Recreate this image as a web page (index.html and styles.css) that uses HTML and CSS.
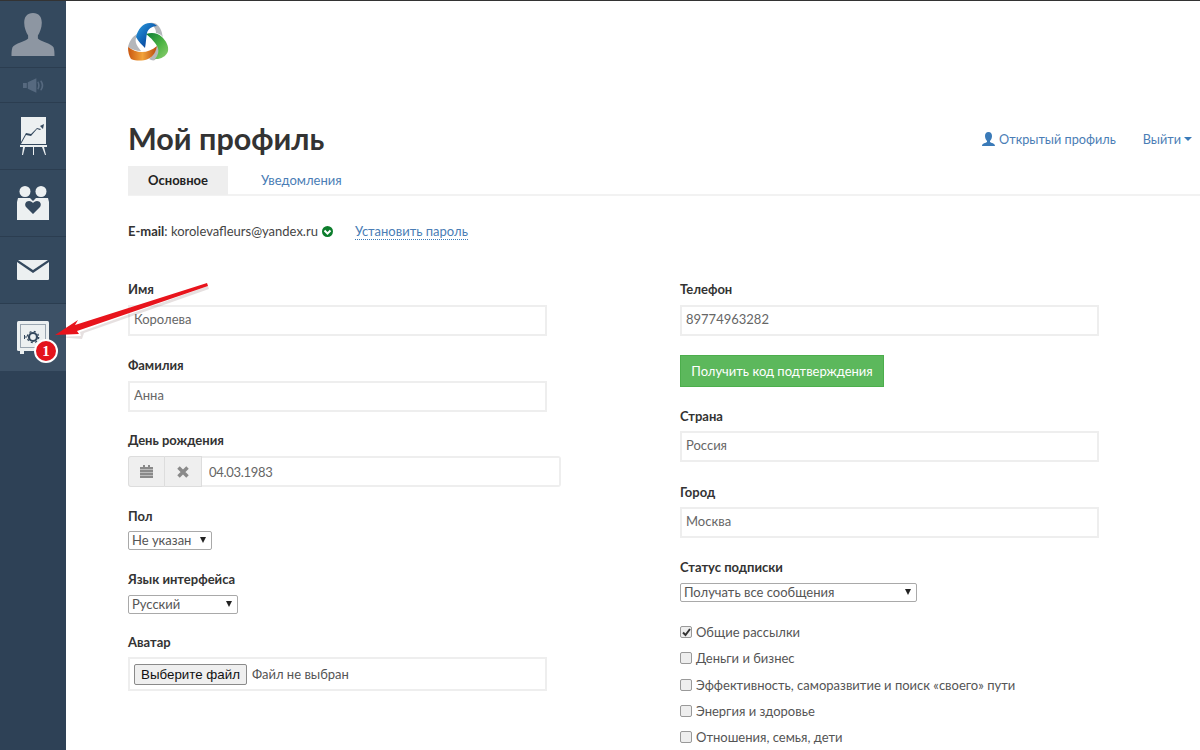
FILE: index.html
```html
<!DOCTYPE html>
<html lang="ru">
<head>
<meta charset="utf-8">
<title>Мой профиль</title>
<link rel="stylesheet" href="styles.css">
</head>
<body>
<div class="app">
  <nav class="side">
    <a class="side-item side-user">
      <svg width="44" height="43" viewBox="0 0 44 44"><path fill="#8d96a2" d="M22 0c6 0 9 4 9 10 0 5-2 10-4 13v3c2 3 14 5 16 9 1 3 1 6 1 9H0c0-3 0-6 1-9 2-4 14-6 16-9v-3c-2-3-4-8-4-13 0-6 3-10 9-10z"/></svg>
    </a>
    <a class="side-item side-sound">
      <svg width="21" height="15" viewBox="0 0 22 15"><path fill="#56697f" d="M0 5h4v5H0zM5 4l9-4v15l-9-4zM16 3c2 3 2 6 0 9l-1-1c1-2 1-5 0-7zM19 2c3 3 3 8 0 11l-1-1c2-3 2-6 0-9z"/></svg>
    </a>
    <a class="side-item side-chart">
      <svg width="27" height="38" viewBox="0 0 27 38"><path fill="#ecf0f1" d="M1 0h25v27H1z"/><path fill="#34495e" d="M1 25l5-9 5 1 6-6 4 1-1 1-3-1-6 7-5-1-5 9zM24 7l-4 2 3 3z"/><path fill="#ecf0f1" d="M0 28h27v2H0zM3 30h2l-2 8H2zM13 30h1v8h-1zM22 30h2l2 8h-1z"/></svg>
    </a>
    <a class="side-item side-people">
      <svg width="32" height="34" viewBox="0 0 32 34"><circle cx="8" cy="5.500" r="5.500" fill="#ecf0f1"/><circle cx="24" cy="5.500" r="5.500" fill="#ecf0f1"/><path fill="#ecf0f1" d="M1 12h12l3 3 3-3h12l1 4v18H0V16z"/><path fill="#34495e" d="M16 28l-7-7c-2-3 0-6 3-6 2 0 3 1 4 2 1-1 2-2 4-2 3 0 5 3 3 6z"/></svg>
    </a>
    <a class="side-item side-mail">
      <svg width="32" height="20" viewBox="0 0 32 20"><path fill="#ecf0f1" d="M1 0h30l-15 10zM0 2l16 11L32 2v17a1 1 0 0 1-1 1H1a1 1 0 0 1-1-1z"/></svg>
    </a>
    <a class="side-item side-safe">
      <svg width="32" height="33" viewBox="0 0 32 33"><rect width="32" height="30" rx="1.500" fill="#ecf0f1"/><path fill="#ecf0f1" d="M3 30h4v3H3zM25 30h4v3h-4z"/><rect x="3.500" y="3.500" width="25" height="23" fill="none" stroke="#9aa6b1"/><circle cx="16" cy="16" r="4" fill="none" stroke="#34495e" stroke-width="2.200"/><circle cx="16" cy="16" r="5.700" fill="none" stroke="#34495e" stroke-width="1.300" stroke-dasharray="2 2.500"/><path stroke="#34495e" fill="none" d="M7 16h3M7.500 14v4"/></svg>
      <span class="badge">1</span>
    </a>
  </nav>
  <main class="main">
    <div class="logo-row">
      <svg class="logo" width="41" height="40" viewBox="0 0 41 40">
        <defs>
          <linearGradient id="gb" x1="0" y1="0" x2="1" y2="1"><stop offset="0" stop-color="#2f9fdf"/><stop offset=".55" stop-color="#0d5cb0"/><stop offset="1" stop-color="#1a2f78"/></linearGradient>
          <linearGradient id="gg" x1="0" y1="0" x2="1" y2="1"><stop offset="0" stop-color="#0b7a35"/><stop offset=".55" stop-color="#4fb544"/><stop offset="1" stop-color="#8fce72"/></linearGradient>
          <linearGradient id="go" x1="0" y1="0" x2="1" y2="0"><stop offset="0" stop-color="#c9560f"/><stop offset=".5" stop-color="#f2a33a"/><stop offset="1" stop-color="#b84a10"/></linearGradient>
        </defs>
        <path fill="#b4b7bb" d="M22 1c5-1 10 2 12 10 0 2 1 3 1 4-3-3-5-4-7-4 0-3-1-5-3-7zM0 25c1-5 4-10 9-13l-1 4c-1 3 0 6 2 9l3 4c-5 0-10-2-13-4zM21 37c3-2 7-7 8-13l2 2c0 5-1 8-4 12-2 1-4 0-6-1z"/>
        <path fill="url(#gb)" d="M8 15c2-8 7-14 14-14 3 0 5 1 7 3-5 0-9 3-10 7-1 5-1 10-2 15-3-3-7-7-9-11z"/>
        <path fill="url(#gg)" d="M18 12c6-2 12-1 16 3 4 4 7 9 6 14-1 4-5 7-10 8h-3c3-4 4-7 3-11-2-5-7-10-12-14z"/>
        <path fill="url(#go)" d="M0 25c4 3 9 5 14 5s10-2 15-6c-1 6-4 11-9 13-5 2-12 2-17 0-2-3-3-7-3-12z"/>
      </svg>
    </div>
    <header class="head">
      <h1>Мой профиль</h1>
      <div class="head-links">
        <a class="link">
          <svg width="13" height="14" viewBox="0 0 13 14"><path fill="#3a7ab8" d="M6.500 0C9 0 10 2 10 4s-1 4-2 5v1c1 1 5 1 5 4H0c0-3 4-3 5-4V9C4 8 3 6 3 4s1-4 3.500-4z"/></svg>
          <span>Открытый профиль</span>
        </a>
        <a class="link link-menu"><span>Выйти</span><i class="caret"></i></a>
      </div>
    </header>
    <div class="tabs">
      <a class="tab tab-active">Основное</a>
      <a class="tab">Уведомления</a>
    </div>
    <div class="email-row">
      <span><b>E-mail</b>: korolevafleurs@yandex.ru</span>
      <svg class="ok" width="11" height="11" viewBox="0 0 11 11"><circle cx="5.500" cy="5.500" r="5.500" fill="#0c7d2c"/><path fill="none" stroke="#fff" stroke-width="2" d="M2.500 4.500l3 3 3-3"/></svg>
      <a class="dashed">Установить пароль</a>
    </div>
    <form class="form">
      <div class="col">
        <div class="field"><label>Имя</label><input class="input" value="Королева"></div>
        <div class="field f75"><label>Фамилия</label><input class="input" value="Анна"></div>
        <div class="field"><label>День рождения</label>
          <div class="date">
            <span class="addon"><svg width="13" height="13" viewBox="0 0 13 13"><path fill="#8a8a8a" d="M0 2h13v11H0zM3 0h2v2H3zM8 0h2v2H8z"/><path stroke="#eee" stroke-width=".5" d="M0 4.500h13M0 7.500h13M0 10.500h13"/></svg></span>
            <span class="addon"><svg width="12" height="12" viewBox="0 0 12 12"><path stroke="#8a8a8a" stroke-width="3.500" d="M1.500 1.500l9 9M10.500 1.500l-9 9"/></svg></span>
            <input class="date-input" value="04.03.1983">
          </div>
        </div>
        <div class="field f63 tight"><label>Пол</label><div class="sel sel-gender">Не указан<i></i></div></div>
        <div class="field f63"><label>Язык интерфейса</label><div class="sel sel-lang">Русский<i></i></div></div>
        <div class="field tight"><label>Аватар</label><div class="filebox"><span class="filebtn">Выберите файл</span><span>Файл не выбран</span></div></div>
      </div>
      <div class="col">
        <div class="field f74"><label>Телефон</label><input class="input" value="89774963282"></div>
        <button class="btn" type="button">Получить код подтверждения</button>
        <div class="field tight"><label>Страна</label><input class="input" value="Россия"></div>
        <div class="field f75 tight"><label>Город</label><input class="input" value="Москва"></div>
        <div class="field f60"><label>Статус подписки</label><div class="sel sel-status">Получать все сообщения<i></i></div></div>
        <ul class="checks">
          <li><span class="cb cb-on"><svg width="9" height="9" viewBox="0 0 9 9"><path fill="none" stroke="#333" stroke-width="2" d="M1 4.500l2.500 2.500L8 1"/></svg></span>Общие рассылки</li>
          <li><span class="cb"></span>Деньги и бизнес</li>
          <li><span class="cb"></span>Эффективность, саморазвитие и поиск «своего» пути</li>
          <li><span class="cb"></span>Энергия и здоровье</li>
          <li><span class="cb"></span>Отношения, семья, дети</li>
        </ul>
      </div>
    </form>
  </main>
</div>
<svg class="arrow" width="160" height="62" viewBox="0 0 160 62">
  <path fill="#5a3030" opacity=".15" d="M158 5L30 51l1 4-24 1 25 2 2-6L159 8z"/>
  <path fill="#e8141c" d="M157 2L25 44l3-5L5 54l24-1-2-3L158 5z"/>
</svg>
</body>
</html>
```
FILE: styles.css
```css
* { box-sizing: border-box; }
html, body { margin: 0; height: 100%; overflow: hidden; }
body {
  font-family: "Lato", "Open Sans", sans-serif;
  font-size: 13px;
  color: #333;
  background: #fff;
  position: relative;
  border-top: 1px solid #333;
}
.app { display: flex; height: 749px; }
.side { width: 66px; flex: none; background: #2e4156; display: flex; flex-direction: column; }
.side-item { display: flex; align-items: center; justify-content: center; background: #34495e; border-bottom: 1px solid #2b3d50; }
.side-user { height: 67px; }
.side-sound { height: 35px; }
.side-chart, .side-people, .side-mail { height: 67px; }
.side-safe { height: 67px; background: #3d5166; border-bottom: 0; position: relative; }
.badge {
  position: absolute; left: 34px; top: 35px; width: 24px; height: 24px; border-radius: 50%;
  background: #e3141c; border: 2px solid #fff; color: #fff; font: bold 15px/20px "Liberation Serif", serif; text-align: center;
}
.main { flex: 1; padding-left: 62px; min-width: 0; }
.logo-row { height: 62px; padding-top: 21px; }
.logo { display: block; }
.head { display: flex; justify-content: space-between; align-items: flex-start; margin-top: 55px; height: 48px; padding-right: 8px; }
h1 { margin: 0; font-size: 30.500px; line-height: 40px; font-weight: 700; color: #333; }
.head-links { display: flex; gap: 27px; padding-top: 13px; }
.link { color: #4a7db5; font-size: 12.700px; display: flex; align-items: center; gap: 4px; }
.link-menu { gap: 3px; }
.caret { display: inline-block; border: 4px solid transparent; border-top-color: #3a7ab8; border-bottom: 0; }
.tabs { display: flex; height: 30px; border-bottom: 2px solid #f2f2f2; }
.tab { height: 29px; line-height: 29px; text-align: center; color: #4a7db5; font-size: 13px; }
.tab-active { width: 100px; background: #eee; color: #222; font-weight: 700; margin-right: 33px; }
.email-row { margin-top: 25px; height: 20px; font-size: 13px; color: #444; display: flex; align-items: center; }
.email-row b { color: #333; }
.ok { margin-left: 4px; }
.dashed { margin-left: 22px; color: #4a7db5; border-bottom: 1px dotted #3a7ab8; line-height: 16px; }
.form { display: grid; grid-template-columns: 419px 419px; column-gap: 133px; margin-top: 40px; }
.field { display: flex; flex-direction: column; align-items: flex-start; height: 76px; }
.f75 { height: 75px; }
.f74 { height: 74px; }
.f63 { height: 63px; }
.f60 { height: 60px; }
label { font-weight: 700; font-size: 13px; line-height: 16px; color: #333; height: 16px; margin-bottom: 8px; }
.tight label { margin-bottom: 7px; }
.input { height: 31px; width: 419px; flex: none; border: 2px solid #eee; padding: 0 4px 3px; font: 13px "Lato", "Open Sans", sans-serif; color: #666; background: #fff; border-radius: 0; outline: 0; }
.date { display: flex; flex: none; width: 433px; height: 31px; border: 2px solid #eee; border-radius: 3px; }
.addon { width: 37px; flex: none; background: #efefef; border: 1px solid #ddd; border-left: 0; display: flex; align-items: center; justify-content: center; margin: -2px 0; }
.addon:first-child { margin-left: -2px; border-left: 1px solid #ddd; border-radius: 3px 0 0 3px; }
.date-input { flex: 1; border: 0; outline: 0; padding: 0 7px; font: 13px "Lato", "Open Sans", sans-serif; letter-spacing: -.3px; color: #666; min-width: 0; }
.sel { height: 19px; flex: none; border: 1px solid #a9a9a9; border-radius: 2px; font-size: 13px; line-height: 17px; color: #555; padding-left: 3px; position: relative; background: #fff; }
.sel i { position: absolute; right: 5px; top: 5px; border: 3.500px solid transparent; border-top: 6px solid #222; border-bottom: 0; }
.sel-gender { width: 84px; }
.sel-lang { width: 110px; }
.sel-status { width: 237px; }
.filebox { width: 419px; height: 34px; flex: none; border: 2px solid #eee; display: flex; align-items: center; padding-left: 4px; color: #555; gap: 5px; }
.filebtn { height: 21px; width: 113px; text-align: center; border: 1px solid #8a8a8a; border-radius: 2px; background: #efefef; color: #111; font-family: "Liberation Sans", sans-serif; font-size: 13.330px; line-height: 19px; }
.btn { display: block; width: 204px; height: 32px; margin: 0 0 21px; background: #5cb85c; border: 1px solid #4cae4c; color: #fff; font: 13px "Lato", "Open Sans", sans-serif; padding: 0; }
.checks { list-style: none; margin: 0; padding: 0; font-size: 13px; color: #555; }
.checks li { height: 26.300px; display: flex; align-items: center; white-space: nowrap; }
.cb { width: 12px; height: 12px; border: 1px solid #999; border-radius: 2px; background: #eee; margin-right: 4px; display: flex; align-items: center; justify-content: center; }
.arrow { position: absolute; left: 50px; top: 280px; }
```
